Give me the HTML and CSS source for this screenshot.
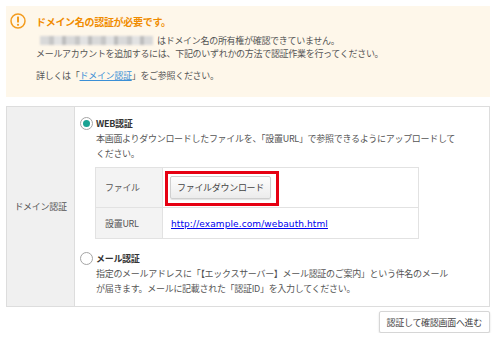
FILE: index.html
```html
<!DOCTYPE html>
<html lang="ja">
<head>
    <meta charset="UTF-8">
    <title>ドメイン認証</title>
    <link rel="stylesheet" href="styles.css">
</head>
<body>
    <div class="alert">
        <svg class="alert-icon" width="16" height="16" viewBox="0 0 16 16">
            <circle cx="8" cy="8" r="7" fill="none" stroke="#f39c1f" stroke-width="1.5"/>
            <rect x="7" y="3.5" width="2" height="6" rx="0.5" fill="#f39c1f"/>
            <circle cx="8" cy="11.8" r="1.1" fill="#f39c1f"/>
        </svg>
        <div class="alert-body">
            <p class="alert-title">ドメイン名の認証が必要です。</p>
            <p class="alert-text"><span class="blurred"></span>はドメイン名の所有権が確認できていません。<br>メールアカウントを追加するには、下記のいずれかの方法で認証作業を行ってください。</p>
            <p class="alert-more">詳しくは「<a href="#" class="help-link">ドメイン認証</a>」をご参照ください。</p>
        </div>
    </div>

    <table class="form-table">
        <tr>
            <th>ドメイン認証</th>
            <td>
                <label class="radio-row">
                    <span class="radio checked"></span>
                    <span class="radio-label">WEB認証</span>
                </label>
                <p class="desc">本画面よりダウンロードしたファイルを、「設置URL」で参照できるようにアップロードして<br>ください。</p>
                <table class="inner-table">
                    <tr class="row-file">
                        <th>ファイル</th>
                        <td><span class="highlight"><button class="btn">ファイルダウンロード</button></span></td>
                    </tr>
                    <tr class="row-url">
                        <th>設置URL</th>
                        <td><a href="#" class="url">http://example.com/webauth.html</a></td>
                    </tr>
                </table>
                <label class="radio-row mail">
                    <span class="radio"></span>
                    <span class="radio-label">メール認証</span>
                </label>
                <p class="desc">指定のメールアドレスに「【エックスサーバー】メール認証のご案内」という件名のメール<br>が届きます。メールに記載された「認証ID」を入力してください。</p>
            </td>
        </tr>
    </table>

    <div class="actions">
        <button class="btn btn-next">認証して確認画面へ進む</button>
    </div>
</body>
</html>
```

FILE: styles.css
```css
body {
    margin: 0;
    padding: 6px 10px 0 6px;
    font-family: "Noto Sans CJK JP", "Noto Sans", sans-serif;
    font-size: 9px;
    letter-spacing: -0.3px;
    color: #444;
    background-color: #fff;
}

p {
    margin: 0;
}

/* warning box */
.alert {
    display: flex;
    gap: 10px;
    padding: 8px 10px 15px 4px;
    background-color: #fef7ea;
}

.alert-icon {
    flex: none;
    margin-top: -1px;
}

.alert-title {
    font-size: 10px;
    font-weight: bold;
    color: #f08c00;
    line-height: 15px;
    margin-bottom: 5px;
}

.alert-text {
    line-height: 13px;
    color: #555;
}

.blurred {
    display: inline-block;
    width: 113px;
    height: 9px;
    margin: 0 4px 0 4px;
    vertical-align: -1px;
    background: repeating-linear-gradient(90deg, #d9d9d9 0 9px, #c6c6c6 9px 14px, #e2e2e2 14px 22px, #bdbdbd 22px 26px);
    filter: blur(1.2px);
}

.alert-more {
    line-height: 13px;
    margin-top: 9px;
    color: #555;
}

.help-link {
    color: #3b8fd6;
}

/* main form */
.form-table {
    width: 484px;
    margin-top: 9px;
    border-collapse: collapse;
    border: 1px solid #ddd;
}

.form-table > tbody > tr > th {
    width: 67px;
    padding: 0;
    background-color: #f0f0f0;
    border-right: 1px solid #ddd;
    font-weight: normal;
    color: #555;
    text-align: center;
    vertical-align: middle;
}

.form-table > tbody > tr > td {
    padding: 9px 24px 10px 5px;
    vertical-align: top;
}

.radio-row {
    display: flex;
    align-items: center;
    gap: 3px;
    line-height: 15px;
}

.radio-row.mail {
    margin-top: 12px;
}

.radio {
    width: 11px;
    height: 11px;
    border: 1px solid #a5a5a5;
    border-radius: 50%;
    background: #fff;
    position: relative;
}

.radio.checked::after {
    content: "";
    position: absolute;
    left: 2px;
    top: 2px;
    width: 7px;
    height: 7px;
    border-radius: 50%;
    background-color: #1aa393;
}

.radio-label {
    font-weight: bold;
    color: #333;
}

.desc {
    margin-left: 16px;
    line-height: 15px;
    color: #555;
}

.inner-table {
    width: 324px;
    margin: 6px 0 0 15px;
    border-collapse: collapse;
    border: 1px solid #e2e2e2;
}

.inner-table th {
    width: 57px;
    padding: 0 0 0 9px;
    background-color: #f3f3f3;
    border-right: 1px solid #e2e2e2;
    font-weight: normal;
    text-align: left;
    color: #555;
}

.inner-table td {
    padding: 0 0 0 2px;
}

.row-file {
    height: 40px;
    border-bottom: 1px solid #e2e2e2;
}

.row-file td {
    padding-top: 2px;
}

.row-url {
    height: 31px;
}

.row-url td {
    padding-left: 8px;
}

.highlight {
    display: inline-block;
    padding: 2px 5px 4px 2px;
    border: 3px solid #e60012;
}

.btn {
    font-family: inherit;
    font-size: 9px;
    letter-spacing: -0.3px;
    color: #444;
    height: 23px;
    padding: 0 6px;
    background: linear-gradient(#fdfdfd, #ececec);
    border: 1px solid #cfcfcf;
    border-radius: 2px;
    box-shadow: 0 1px 1px rgba(0, 0, 0, 0.12);
    cursor: pointer;
}

.url {
    font-family: "DejaVu Sans", sans-serif;
    font-size: 9px;
    letter-spacing: 0.1px;
    color: #0000ee;
}

.actions {
    display: flex;
    justify-content: flex-end;
    margin-top: 4px;
}

.btn-next {
    height: 22px;
    padding: 0 7px;
    background: #fff;
    border: 1px solid #d6d6d6;
    box-shadow: 0 1px 2px rgba(0, 0, 0, 0.15);
}
```
